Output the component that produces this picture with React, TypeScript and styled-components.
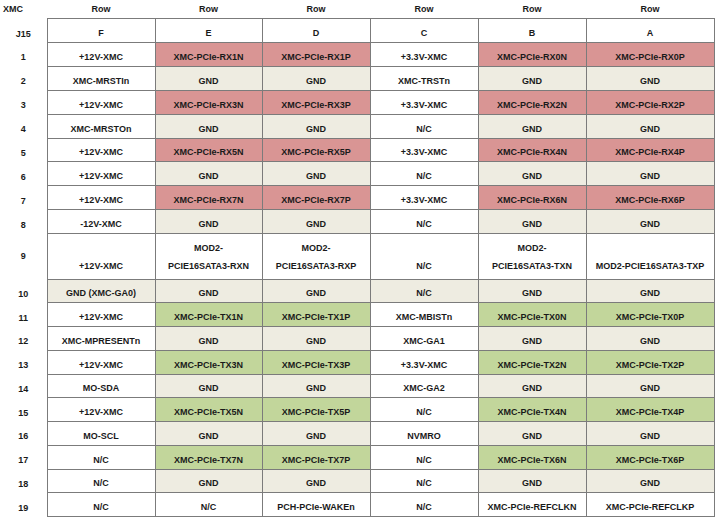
import React from 'react';
import styled, { createGlobalStyle } from 'styled-components';

// ---------- global ----------

const GlobalStyle = createGlobalStyle`
  html, body {
    margin: 0;
    padding: 0;
    background: #ffffff;
  }
  body {
    font-family: "Liberation Sans", Arial, sans-serif;
  }
`;

// ---------- styles ----------

type Tone = 'w' | 'r' | 'b' | 'g';

const toneColors: Record<Tone, string> = {
  w: '#ffffff',
  r: '#d99594',
  b: '#eeece1',
  g: '#c2d69b',
};

const Page = styled.div`
  width: 721px;
  height: 517px;
  overflow: hidden;
  background: #ffffff;
`;

const Sheet = styled.table`
  width: 714px;
  border-collapse: collapse;
  table-layout: fixed;
  font-size: 9px;
  font-weight: 700;
  color: #1a1a1a;
  line-height: 18px;
`;

const HeadRow = styled.tr`
  height: 18px;
`;

const HeadCell = styled.th<{ $left?: boolean }>`
  padding: 0 0 0 ${(p) => (p.$left ? '3px' : '0')};
  text-align: ${(p) => (p.$left ? 'left' : 'center')};
  vertical-align: middle;
  font-weight: 700;
`;

const BodyRow = styled.tr<{ $h: number }>`
  height: ${(p) => p.$h}px;
`;

const LabelCell = styled.td<{ $tall?: boolean }>`
  padding: 0;
  text-align: center;
  vertical-align: ${(p) => (p.$tall ? 'middle' : 'bottom')};
  border: none;
`;

const Cell = styled.td<{ $tone: Tone; $tall?: boolean }>`
  padding: 0 2px ${(p) => (p.$tall ? '4px' : '0')};
  text-align: center;
  vertical-align: bottom;
  white-space: pre-line;
  background: ${(p) => toneColors[p.$tone]};
  border: 1px solid #7b7b7b;
`;

// ---------- data ----------

type CellData = [string, Tone];

interface PinRow {
  label: string;
  height: number;
  tall?: boolean;
  cells: CellData[];
}

const rx = (n: string): CellData => [`XMC-PCIe-RX${n}`, 'r'];
const tx = (n: string): CellData => [`XMC-PCIe-TX${n}`, 'g'];
const gnd: CellData = ['GND', 'b'];
const w = (t: string): CellData => [t, 'w'];

const rows: PinRow[] = [
  { label: 'J15', height: 24, cells: [w('F'), w('E'), w('D'), w('C'), w('B'), w('A')] },
  { label: '1', height: 23.9, cells: [w('+12V-XMC'), rx('1N'), rx('1P'), w('+3.3V-XMC'), rx('0N'), rx('0P')] },
  { label: '2', height: 23.9, cells: [w('XMC-MRSTIn'), gnd, gnd, w('XMC-TRSTn'), gnd, gnd] },
  { label: '3', height: 23.9, cells: [w('+12V-XMC'), rx('3N'), rx('3P'), w('+3.3V-XMC'), rx('2N'), rx('2P')] },
  { label: '4', height: 23.9, cells: [w('XMC-MRSTOn'), gnd, gnd, w('N/C'), gnd, gnd] },
  { label: '5', height: 23.9, cells: [w('+12V-XMC'), rx('5N'), rx('5P'), w('+3.3V-XMC'), rx('4N'), rx('4P')] },
  { label: '6', height: 23.9, cells: [w('+12V-XMC'), gnd, gnd, w('N/C'), gnd, gnd] },
  { label: '7', height: 23.9, cells: [w('+12V-XMC'), rx('7N'), rx('7P'), w('+3.3V-XMC'), rx('6N'), rx('6P')] },
  { label: '8', height: 23.9, cells: [w('-12V-XMC'), gnd, gnd, w('N/C'), gnd, gnd] },
  {
    label: '9',
    height: 45.5,
    tall: true,
    cells: [
      w('+12V-XMC'),
      w('MOD2-\nPCIE16SATA3-RXN'),
      w('MOD2-\nPCIE16SATA3-RXP'),
      w('N/C'),
      w('MOD2-\nPCIE16SATA3-TXN'),
      w('MOD2-PCIE16SATA3-TXP'),
    ],
  },
  { label: '10', height: 23.75, cells: [['GND (XMC-GA0)', 'b'], gnd, gnd, ['N/C', 'b'], gnd, gnd] },
  { label: '11', height: 23.75, cells: [w('+12V-XMC'), tx('1N'), tx('1P'), w('XMC-MBISTn'), tx('0N'), tx('0P')] },
  { label: '12', height: 23.75, cells: [w('XMC-MPRESENTn'), gnd, gnd, w('XMC-GA1'), gnd, gnd] },
  { label: '13', height: 23.75, cells: [w('+12V-XMC'), tx('3N'), tx('3P'), w('+3.3V-XMC'), tx('2N'), tx('2P')] },
  { label: '14', height: 23.75, cells: [w('MO-SDA'), gnd, gnd, w('XMC-GA2'), gnd, gnd] },
  { label: '15', height: 23.75, cells: [w('+12V-XMC'), tx('5N'), tx('5P'), w('N/C'), tx('4N'), tx('4P')] },
  { label: '16', height: 23.75, cells: [w('MO-SCL'), gnd, gnd, w('NVMRO'), gnd, gnd] },
  { label: '17', height: 23.75, cells: [w('N/C'), tx('7N'), tx('7P'), w('N/C'), tx('6N'), tx('6P')] },
  { label: '18', height: 23.75, cells: [w('N/C'), gnd, gnd, w('N/C'), gnd, gnd] },
  {
    label: '19',
    height: 23.75,
    cells: [w('N/C'), w('N/C'), w('PCH-PCIe-WAKEn'), w('N/C'), w('XMC-PCIe-REFCLKN'), w('XMC-PCIe-REFCLKP')],
  },
];

const colWidths = [47, 108, 107, 108, 108, 108, 128];

// ---------- component ----------

const App: React.FC = () => {
  return (
    <Page>
      <GlobalStyle />
      <Sheet>
        <colgroup>
          {colWidths.map((cw, i) => (
            <col key={i} style={{ width: cw }} />
          ))}
        </colgroup>
        <thead>
          <HeadRow>
            <HeadCell $left>XMC</HeadCell>
            {Array.from({ length: 6 }).map((_, i) => (
              <HeadCell key={i}>Row</HeadCell>
            ))}
          </HeadRow>
        </thead>
        <tbody>
          {rows.map((row) => (
            <BodyRow key={row.label} $h={row.height}>
              <LabelCell $tall={row.tall}>{row.label}</LabelCell>
              {row.cells.map(([text, tone], i) => (
                <Cell key={i} $tone={tone} $tall={row.tall}>
                  {text}
                </Cell>
              ))}
            </BodyRow>
          ))}
        </tbody>
      </Sheet>
    </Page>
  );
};

export default App;
